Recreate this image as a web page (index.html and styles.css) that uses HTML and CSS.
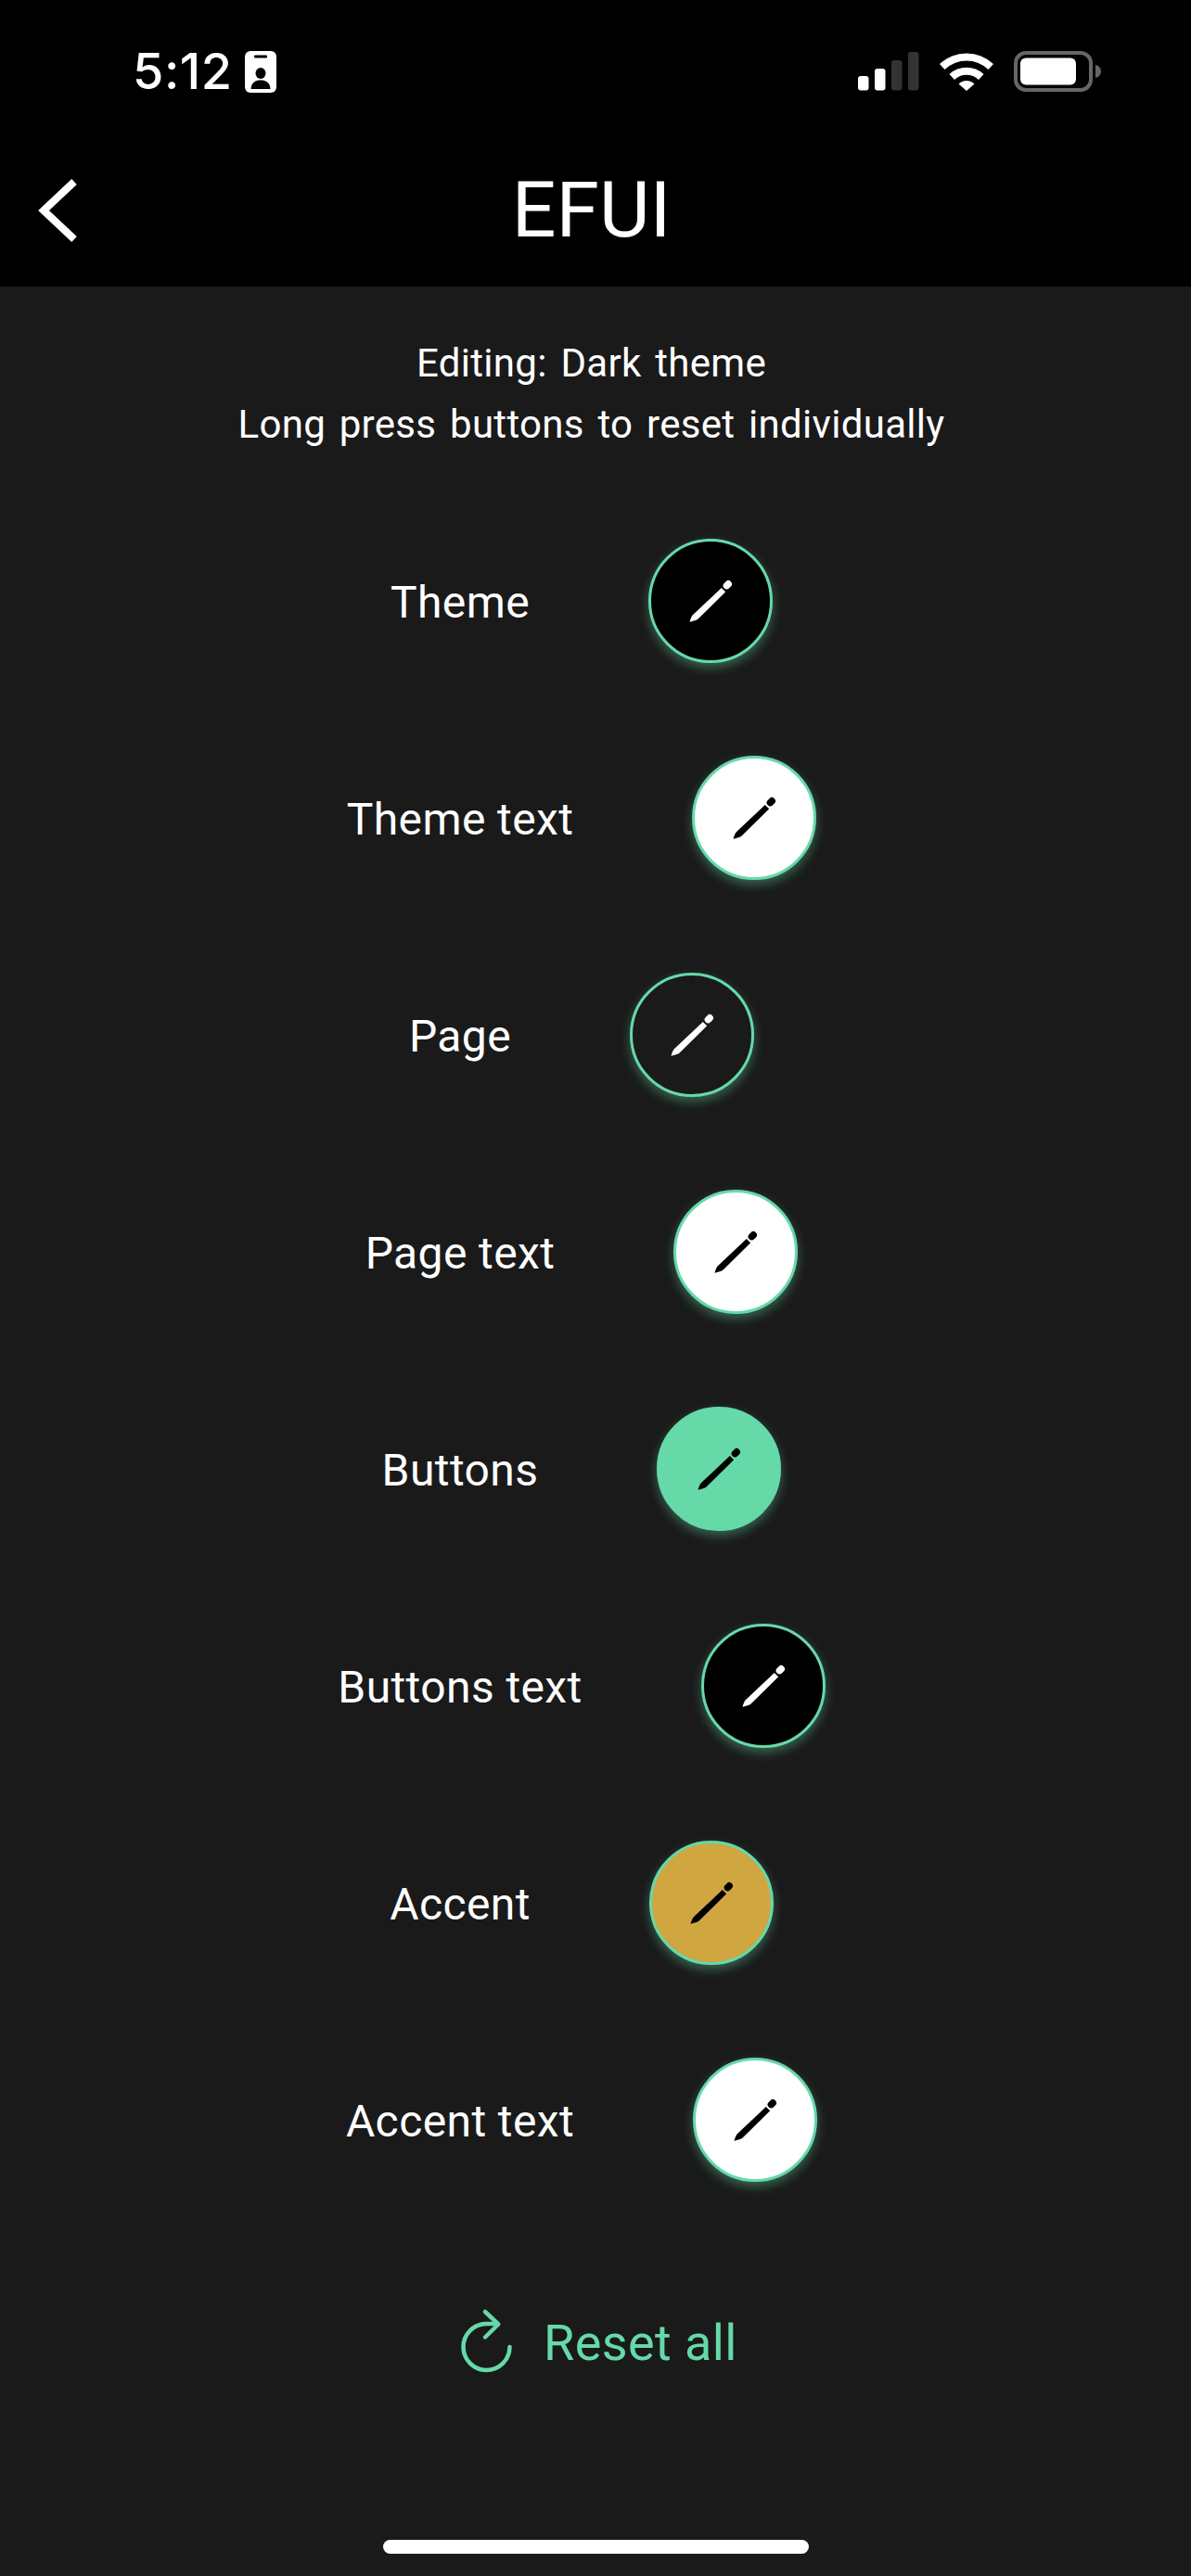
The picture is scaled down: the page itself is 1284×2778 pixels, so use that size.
FILE: index.html
```html
<!DOCTYPE html>
<html>
<head>
  <meta charset="utf-8">
  <title>EFUI</title>
  <link rel="stylesheet" href="styles.css">
</head>
<body>
  <svg class="defs" width="0" height="0">
    <symbol id="pencil" viewBox="0 0 50 50">
      <path d="M2.500 47.700 C3.500 44.500 4.500 41.500 5.800 40.300 L36.800 11 L41.200 15.300 L11.800 44.300 C10 46 6 47 2.500 47.700 Z" fill="currentColor"/>
      <path d="M42.400 8.600 L44.200 6.800" stroke="currentColor" stroke-width="7.500" stroke-linecap="round"/>
    </symbol>
  </svg>
  <header class="top">
    <div class="status">
      <div class="status-left">
        <span class="time">5:12</span>
        <svg class="badge" width="34" height="45" viewBox="0 0 34 45">
          <rect width="34" height="45" rx="6" fill="#fff"/>
          <rect x="10" y="4.500" width="14" height="3" rx="1" fill="#000"/>
          <ellipse cx="17" cy="24" rx="5.500" ry="6" fill="#000"/>
          <path d="M6.500 41 C7 34 11 31.500 17 31.500 C23 31.500 27 34 27.500 41 Z" fill="#000"/>
        </svg>
      </div>
      <div class="status-right">
        <svg width="66" height="42" viewBox="0 0 66 42">
          <rect x="0" y="26" width="11.500" height="15.500" rx="3" fill="#fff"/>
          <rect x="18" y="18" width="11.500" height="23.500" rx="3" fill="#fff"/>
          <rect x="36" y="9" width="11.500" height="32.500" rx="3" fill="#333"/>
          <rect x="54" y="0" width="11.500" height="41.500" rx="3" fill="#333"/>
        </svg>
        <svg class="wifi" width="58" height="42" viewBox="0 0 58 42">
          <path d="M0 13 A42 42 0 0 1 58 13 L52.500 19 A34 34 0 0 0 5.500 19 Z" fill="#fff"/>
          <path d="M10.500 24 A27 27 0 0 1 47.500 24 L42 30 A19 19 0 0 0 16 30 Z" fill="#fff"/>
          <path d="M20.500 34.500 A12 12 0 0 1 37.500 34.500 L29 42 Z" fill="#fff"/>
        </svg>
        <svg class="battery" width="95" height="44" viewBox="0 0 95 44">
          <rect x="2" y="2" width="81" height="40" rx="11" fill="none" stroke="#666" stroke-width="4"/>
          <rect x="7" y="7.500" width="60" height="29" rx="6" fill="#fff"/>
          <path d="M88 15 C92 16 94 19 94 22 C94 25 92 28 88 29 Z" fill="#666"/>
        </svg>
      </div>
    </div>
    <div class="titlebar">
      <svg class="back" width="46" height="72" viewBox="0 0 46 72">
        <polyline points="40,5 7,36 40,67" fill="none" stroke="#fff" stroke-width="8"/>
      </svg>
      <h1 class="title">EFUI</h1>
    </div>
  </header>

  <main class="page">
    <p class="note">Editing: Dark theme<br>Long press buttons to reset individually</p>

    <div class="rows">
      <div class="row">
        <span class="label">Theme</span>
        <button class="swatch swatch-black"><svg class="pen"><use href="#pencil"/></svg></button>
      </div>
      <div class="row">
        <span class="label">Theme text</span>
        <button class="swatch swatch-white"><svg class="pen"><use href="#pencil"/></svg></button>
      </div>
      <div class="row">
        <span class="label">Page</span>
        <button class="swatch swatch-page"><svg class="pen"><use href="#pencil"/></svg></button>
      </div>
      <div class="row">
        <span class="label">Page text</span>
        <button class="swatch swatch-white"><svg class="pen"><use href="#pencil"/></svg></button>
      </div>
      <div class="row">
        <span class="label">Buttons</span>
        <button class="swatch swatch-green"><svg class="pen"><use href="#pencil"/></svg></button>
      </div>
      <div class="row">
        <span class="label">Buttons text</span>
        <button class="swatch swatch-black"><svg class="pen"><use href="#pencil"/></svg></button>
      </div>
      <div class="row">
        <span class="label">Accent</span>
        <button class="swatch swatch-gold"><svg class="pen"><use href="#pencil"/></svg></button>
      </div>
      <div class="row">
        <span class="label">Accent text</span>
        <button class="swatch swatch-white"><svg class="pen"><use href="#pencil"/></svg></button>
      </div>
    </div>

    <div class="reset">
      <svg class="reset-icon" width="60" height="70" viewBox="0 0 60 70">
        <path d="M54.500 42 A25 25 0 1 1 29.500 17 L41 17" fill="none" stroke="#66d9a9" stroke-width="4.500" stroke-linecap="round"/>
        <path d="M28 4 L42.300 17.500 L28 31.500" fill="none" stroke="#66d9a9" stroke-width="4.500" stroke-linecap="round" stroke-linejoin="round"/>
      </svg>
      <span class="reset-text">Reset all</span>
    </div>
  </main>

  <div class="home-row"><div class="home-bar"></div></div>
</body>
</html>
```

FILE: styles.css
```css
* {
  box-sizing: border-box;
}

html, body {
  margin: 0;
  padding: 0;
}

body {
  width: 1284px;
  height: 2778px;
  overflow: hidden;
  background: #1a1a1a;
  color: #fff;
  font-family: Roboto, "Noto Sans", sans-serif;
  display: flex;
  flex-direction: column;
}

.defs {
  display: block;
  height: 0;
}

/* header */
.top {
  height: 309px;
  background: #000;
  flex: none;
}

.status {
  display: flex;
  justify-content: space-between;
  align-items: center;
  height: 46px;
  margin-top: 54px;
  padding: 0 96px 0 143px;
}

.status-left {
  display: flex;
  align-items: center;
  gap: 14px;
}

.time {
  font-family: Inter, Roboto, sans-serif;
  font-size: 54px;
  font-weight: 500;
  line-height: 46px;
  letter-spacing: 0.5px;
}

.badge {
  display: block;
}

.status-right {
  display: flex;
  align-items: center;
  gap: 22px;
}

.status-right svg {
  display: block;
}

.titlebar {
  display: flex;
  align-items: center;
  height: 100px;
  margin-top: 77px;
  padding-left: 40px;
  padding-right: 9px;
}

.back {
  flex: none;
  display: block;
}

.title {
  flex: 1;
  margin: 0 0 0 -86px;
  text-align: center;
  font-size: 84px;
  font-weight: 400;
  line-height: 100px;
}

/* page */
.page {
  width: 1275px;
  padding-top: 50px;
}

.note {
  margin: 0;
  text-align: center;
  font-size: 42px;
  line-height: 66px;
  letter-spacing: 0.3px;
  word-spacing: 4px;
}

.rows {
  margin-top: 90px;
  display: flex;
  flex-direction: column;
  gap: 100px;
}

/* label stays centred on x=496, the swatch hangs off its right edge */
.row {
  width: 992px;
  height: 134px;
  display: flex;
  justify-content: center;
  align-items: center;
  gap: 128px;
}

.label {
  font-size: 48px;
  letter-spacing: 0.4px;
  white-space: nowrap;
  padding-top: 2px;
}

.swatch {
  flex: none;
  width: 134px;
  height: 134px;
  margin-right: -262px;
  padding: 0;
  border-radius: 50%;
  border: 3px solid #66d9a9;
  box-shadow: 0 5px 12px rgba(102, 217, 169, 0.4);
  display: flex;
  align-items: center;
  justify-content: center;
}

.pen {
  width: 50px;
  height: 50px;
  display: block;
}

.swatch-black {
  background: #000;
  color: #fff;
}

.swatch-white {
  background: #fff;
  color: #000;
}

.swatch-page {
  background: #1a1a1a;
  color: #fff;
}

.swatch-green {
  background: #66d9a9;
  color: #000;
}

.swatch-gold {
  background: #cfa640;
  color: #000;
}

.reset {
  margin-top: 136px;
  padding-left: 495px;
  display: flex;
  align-items: flex-end;
  gap: 31px;
  color: #66d9a9;
}

.reset-icon {
  display: block;
  flex: none;
}

.reset-text {
  font-size: 54px;
  line-height: 64px;
  letter-spacing: 0.4px;
}

.home-row {
  margin-top: auto;
  padding-bottom: 24px;
  display: flex;
  justify-content: center;
}

.home-bar {
  width: 459px;
  height: 15px;
  border-radius: 8px;
  background: #fff;
}
```
